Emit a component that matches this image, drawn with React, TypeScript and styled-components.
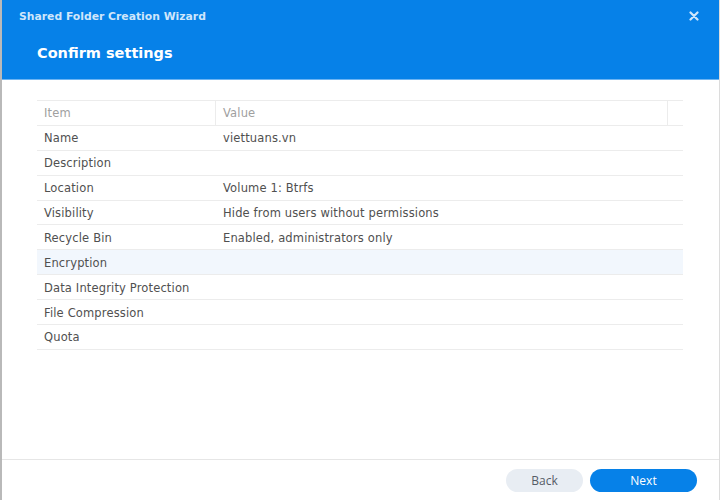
import React from "react";
import styled, { createGlobalStyle } from "styled-components";

const Global = createGlobalStyle`
  html, body { margin: 0; padding: 0; background: #fff; }
  body { font-family: "DejaVu Sans", Verdana, sans-serif; }
  * { box-sizing: border-box; }
`;

const Window = styled.div`
  width: 720px;
  height: 500px;
  display: flex;
  flex-direction: column;
  background: #fff;
  border-left: 2px solid #b9b9b9;
  border-right: 1px solid #dcdcdc;
  overflow: hidden;
`;

const Header = styled.div`
  height: 80px;
  background: #0681e8;
  border-bottom: 1px solid #6db4f2;
  display: flex;
  flex-direction: column;
  margin-left: -2px;
  margin-right: -1px;
`;

const TitleBar = styled.div`
  height: 32px;
  display: flex;
  align-items: center;
  justify-content: space-between;
  padding: 0 20px 0 19px;
`;

const WindowTitle = styled.div`
  font-size: 10.8px;
  font-weight: bold;
  color: #cfe6fb;
`;

const Close = styled.div`
  width: 12px;
  height: 12px;
  display: flex;
  align-items: center;
  justify-content: center;
`;

const Heading = styled.div`
  padding: 13px 0 0 37px;
  font-size: 14.5px;
  font-weight: bold;
  color: #ffffff;
`;

const Body = styled.div`
  flex: 1;
  padding: 20px 35px 0 35px;
`;

const Table = styled.div`
  width: 646px;
  display: flex;
  flex-direction: column;
  border-top: 1px solid #ececec;
`;

const Row = styled.div<{ $highlight?: boolean; $head?: boolean }>`
  height: 24.9px;
  display: grid;
  grid-template-columns: ${(p) => (p.$head ? "179px 452px 15px" : "179px 467px")};
  border-bottom: 1px solid #ececec;
  background: ${(p) => (p.$highlight ? "#f2f7fd" : "#fff")};
`;

const Cell = styled.div<{ $head?: boolean; $divider?: boolean }>`
  display: flex;
  align-items: center;
  padding-left: 7px;
  padding-top: 1px;
  font-size: 11.5px;
  letter-spacing: 0.15px;
  color: ${(p) => (p.$head ? "#a0a0a0" : "#505050")};
  border-right: ${(p) => (p.$divider ? "1px solid #ececec" : "none")};
  white-space: nowrap;
`;

const Footer = styled.div`
  height: 41px;
  border-top: 1px solid #e6e6e6;
  display: flex;
  align-items: center;
  justify-content: flex-end;
  gap: 7px;
  padding: 0 22px 0 0;
  margin-left: -2px;
`;

const Button = styled.button<{ $primary?: boolean }>`
  height: 23px;
  width: ${(p) => (p.$primary ? "107px" : "77px")};
  border: none;
  border-radius: 12px;
  background: ${(p) => (p.$primary ? "#0681e8" : "#e8edf3")};
  color: ${(p) => (p.$primary ? "#ffffff" : "#555c66")};
  font-family: "Open Sans", "DejaVu Sans", sans-serif;
  font-size: 12px;
  padding: 0;
  cursor: pointer;
`;

const rows: [string, string][] = [
  ["Name", "viettuans.vn"],
  ["Description", ""],
  ["Location", "Volume 1: Btrfs"],
  ["Visibility", "Hide from users without permissions"],
  ["Recycle Bin", "Enabled, administrators only"],
  ["Encryption", ""],
  ["Data Integrity Protection", ""],
  ["File Compression", ""],
  ["Quota", ""],
];

export default function App() {
  return (
    <>
      <Global />
      <Window>
        <Header>
          <TitleBar>
            <WindowTitle>Shared Folder Creation Wizard</WindowTitle>
            <Close>
              <svg width="10" height="10" viewBox="0 0 10 10">
                <path d="M1.5 1.5 L8.5 8.5 M8.5 1.5 L1.5 8.5" stroke="#cfe6fb" strokeWidth="2.2" strokeLinecap="round" />
              </svg>
            </Close>
          </TitleBar>
          <Heading>Confirm settings</Heading>
        </Header>
        <Body>
          <Table>
            <Row $head>
              <Cell $head $divider>Item</Cell>
              <Cell $head $divider>Value</Cell>
              <Cell $head />
            </Row>
            {rows.map(([k, v]) => (
              <Row key={k} $highlight={k === "Encryption"}>
                <Cell>{k}</Cell>
                <Cell>{v}</Cell>
              </Row>
            ))}
          </Table>
        </Body>
        <Footer>
          <Button>Back</Button>
          <Button $primary>Next</Button>
        </Footer>
      </Window>
    </>
  );
}
